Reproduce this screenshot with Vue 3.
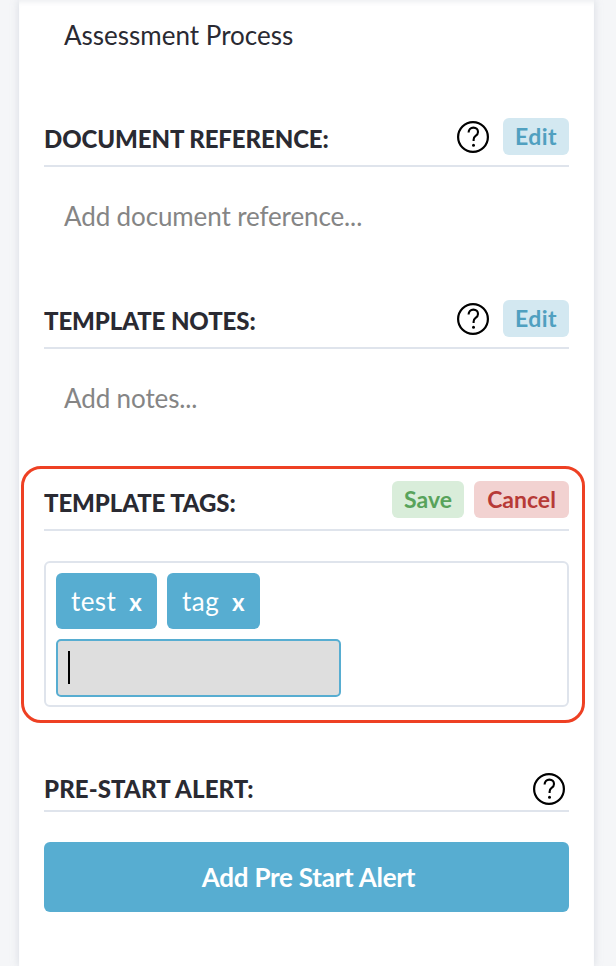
<script setup>
const sections = [
  { title: 'DOCUMENT REFERENCE:', text: 'Add document reference...' },
  { title: 'TEMPLATE NOTES:', text: 'Add notes...' },
]
const tags = ['test', 'tag']
</script>

<template>
  <div class="page">
    <main class="card">
      <p class="lead">Assessment Process</p>

      <section v-for="s in sections" :key="s.title" class="section">
        <header class="head">
          <h2>{{ s.title }}</h2>
          <svg class="help" viewBox="0 0 32 32" width="32" height="32" aria-hidden="true">
            <circle cx="16" cy="16" r="14.9" fill="none" stroke="#000" stroke-width="2.2" />
            <path d="M11.6 11.6c0-3 2-5 4.8-5s4.6 1.9 4.6 4.3c0 1.9-1 3-2.4 4-1.4 1-2 2-2 3.9v1.1" fill="none" stroke="#000" stroke-width="2.1" />
            <circle cx="16.5" cy="24.3" r="1.5" fill="#000" />
          </svg>
          <button class="btn edit">Edit</button>
        </header>
        <p class="placeholder">{{ s.text }}</p>
      </section>

      <section class="tags-callout">
        <header class="head">
          <h2>TEMPLATE TAGS:</h2>
          <button class="btn save">Save</button>
          <button class="btn cancel">Cancel</button>
        </header>
        <div class="tag-box">
          <div class="tag-row">
            <span v-for="t in tags" :key="t" class="tag">{{ t }}<b>x</b></span>
          </div>
          <div class="tag-input"><i class="caret"></i></div>
        </div>
      </section>

      <section class="section alert">
        <header class="head">
          <h2>PRE-START ALERT:</h2>
          <svg class="help" viewBox="0 0 32 32" width="32" height="32" aria-hidden="true">
            <circle cx="16" cy="16" r="14.9" fill="none" stroke="#000" stroke-width="2.2" />
            <path d="M11.6 11.6c0-3 2-5 4.8-5s4.6 1.9 4.6 4.3c0 1.9-1 3-2.4 4-1.4 1-2 2-2 3.9v1.1" fill="none" stroke="#000" stroke-width="2.1" />
            <circle cx="16.5" cy="24.3" r="1.5" fill="#000" />
          </svg>
        </header>
        <button class="add">Add Pre Start Alert</button>
      </section>
    </main>
  </div>
</template>

<style>
html, body { margin: 0; background: #f5f6f8; }
</style>

<style scoped>
.page {
  width: 616px;
  height: 966px;
  overflow: hidden;
  box-sizing: border-box;
  padding: 0 22px 0 19px;
  font-family: Lato, sans-serif;
  color: #2a2a32;
  background: #f5f6f8;
}
.card {
  height: 966px;
  box-sizing: border-box;
  padding: 0 25px;
  background: #fff;
  box-shadow: 0 0 8px rgba(160, 170, 185, 0.35), inset 0 5px 5px -3px rgba(160, 170, 185, 0.2);
}
.lead {
  margin: 0;
  padding: 20px 0 0 20px;
  font-size: 26px;
  line-height: 30px;
  height: 98px;
}
.head {
  display: flex;
  align-items: center;
  border-bottom: 2px solid #dfe4ec;
  height: 39px;
  padding-bottom: 8px;
}
.head h2 {
  margin: 0 auto 0 0;
  padding-top: 2px;
  font-size: 24px;
  font-weight: 900;
  line-height: 26px;
  letter-spacing: -0.1px;
}
.section { height: 182px; }
.help { margin: 0 14px 1px 0; flex: none; }
.btn {
  height: 37px;
  padding: 0;
  border: 0;
  border-radius: 6px;
  font: 700 23px/37px Lato, sans-serif;
  margin-top: -2px;
}
.edit { width: 66px; background: #d3e8f1; color: #50a0c0; letter-spacing: 0.4px; }
.save { width: 72px; background: #d9edda; color: #58a35b; margin-right: 10px; }
.cancel { width: 95px; background: #f2d2d1; color: #b73a37; }
.placeholder {
  margin: 0;
  padding: 34px 0 0 20px;
  font-size: 26px;
  line-height: 30px;
  color: #858585;
  letter-spacing: -0.12px;
}
.tags-callout {
  margin: -16px -16px 0 -23px;
  box-sizing: border-box;
  height: 257px;
  padding: 13px 13px 13px 20px;
  border: 3px solid #ee4023;
  border-radius: 20px;
}
.tags-callout .btn { margin-top: -4px; }
.tag-box {
  margin-top: 30px;
  box-sizing: border-box;
  height: 146px;
  padding: 10px;
  border: 2px solid #dfe4ec;
  border-radius: 6px;
}
.tag-row { display: flex; gap: 10px; }
.tag {
  display: flex;
  align-items: center;
  height: 56px;
  padding: 0 15px;
  border-radius: 6px;
  background: #57add1;
  color: #fff;
  font-size: 26px;
  letter-spacing: 0.4px;
}
.tag b { margin-left: 13px; font-size: 24px; font-weight: 700; }
.tag-input {
  margin-top: 10px;
  box-sizing: border-box;
  width: 285px;
  height: 58px;
  padding: 10px;
  border: 2px solid #57add1;
  border-radius: 5px;
  background: #dedede;
}
.caret { display: block; width: 2px; height: 33px; background: #000; }
.alert { margin-top: 40px; }
.alert .head { height: 47px; padding-bottom: 0; }
.alert .head h2 { padding-top: 4px; letter-spacing: 0.1px; }
.alert .help { margin: 4px 4px 0 0; }
.add {
  display: block;
  width: 100%;
  height: 70px;
  margin-top: 30px;
  padding: 0 0 0 4px;
  border: 0;
  border-radius: 6px;
  background: #57add1;
  color: #fff;
  font: 700 26px/70px Lato, sans-serif;
  letter-spacing: -0.25px;
}
</style>
